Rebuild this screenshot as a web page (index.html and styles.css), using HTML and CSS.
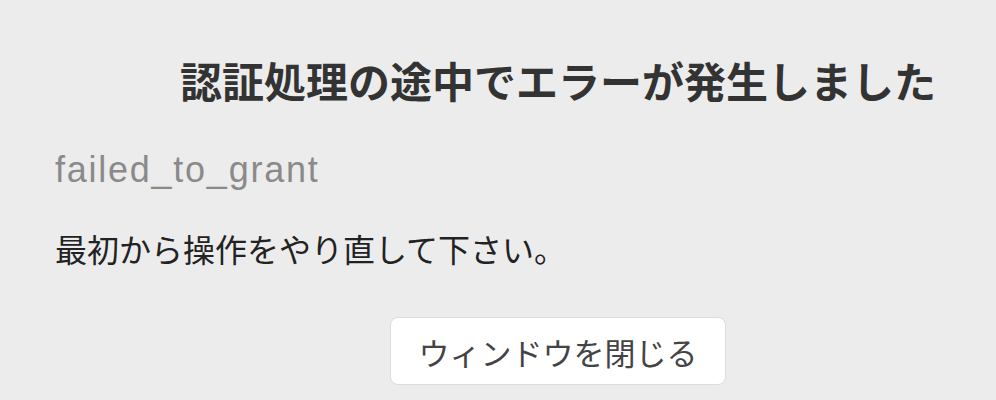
FILE: index.html
```html
<!DOCTYPE html>
<html lang="ja">
<head>
<meta charset="utf-8">
<title>エラー</title>
<link rel="stylesheet" href="styles.css">
</head>
<body>
<main class="page">
  <h1 class="title">認証処理の途中でエラーが発生しました</h1>
  <p class="code">failed_to_grant</p>
  <p class="msg">最初から操作をやり直して下さい。</p>
  <div class="actions">
    <button class="close-btn" type="button">ウィンドウを閉じる</button>
  </div>
</main>
</body>
</html>
```

FILE: styles.css
```css
html, body {
  margin: 0;
  padding: 0;
  background: #ececec;
}

body {
  font-family: "Noto Sans CJK JP", "Liberation Sans", sans-serif;
  color: #222;
}

.page {
  box-sizing: border-box;
  width: 996px;
  padding: 50px 0 0 55px;
}

.title {
  margin: 0;
  padding-left: 65px;
  font-size: 42px;
  line-height: 60px;
  font-weight: 700;
  color: #333;
  text-align: center;
}

.code {
  margin: 40px 0 0;
  font-family: "Liberation Sans", sans-serif;
  font-size: 36px;
  line-height: 40px;
  letter-spacing: 1.75px;
  color: #8a8a8a;
}

.msg {
  margin: 38px 0 0;
  font-size: 32px;
  line-height: 40px;
  color: #222;
}

.actions {
  margin-top: 49px;
  padding-left: 65px;
  display: flex;
  justify-content: center;
}

.close-btn {
  box-sizing: border-box;
  height: 68px;
  width: 336px;
  padding: 0;
  background: #fff;
  border: 1px solid #dcdcdc;
  border-radius: 8px;
  font-family: "Noto Sans CJK JP", sans-serif;
  font-size: 31px;
  line-height: 1;
  white-space: nowrap;
  color: #444;
}
```
